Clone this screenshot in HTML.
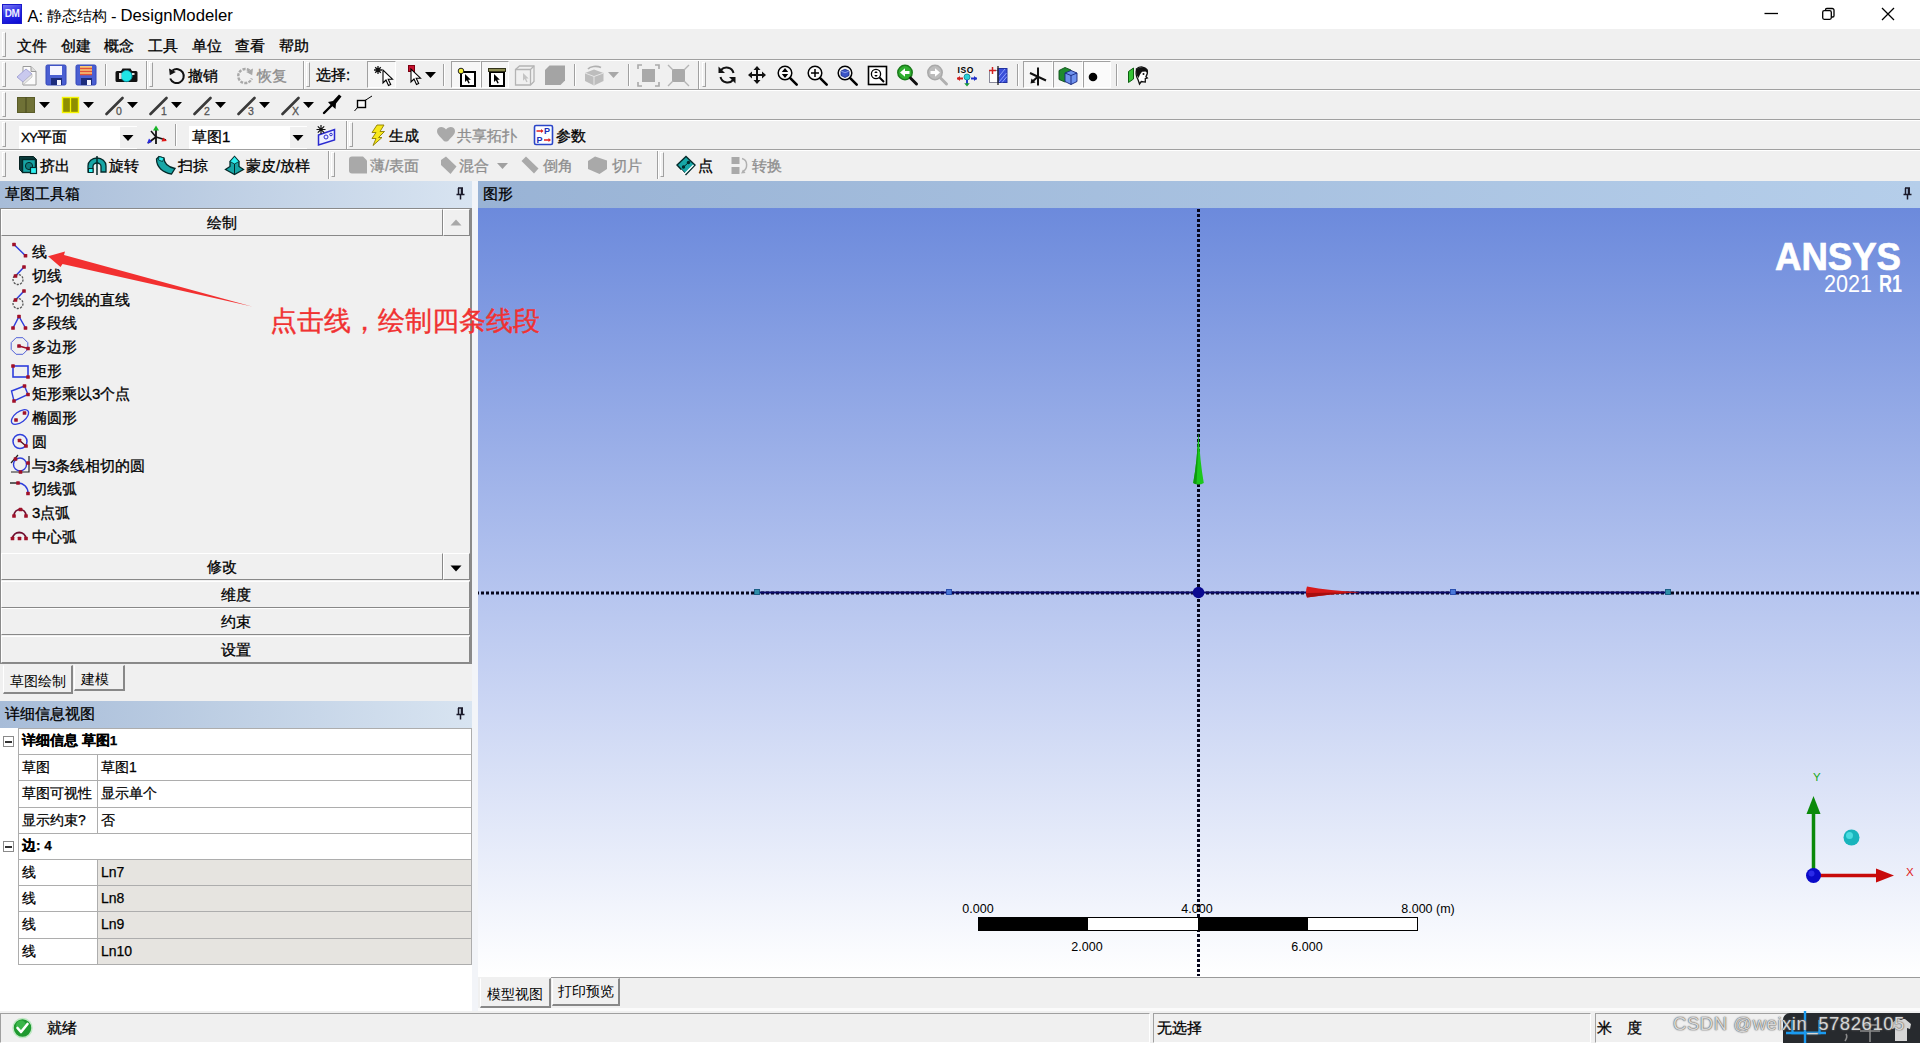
<!DOCTYPE html>
<html><head><meta charset="utf-8">
<style>
*{box-sizing:border-box;margin:0;padding:0}
html,body{width:1920px;height:1043px;overflow:hidden;background:#f0f0f0;font-family:"Liberation Sans",sans-serif;font-size:15px;color:#000}
.a{position:absolute}
.t{position:absolute;white-space:nowrap;line-height:20px;height:20px;-webkit-text-stroke-width:.3px}
.g{color:#8e8e8e}
.t,.ti{text-align-last:justify;text-justify:inter-character}
.hl{position:absolute;left:0;width:1920px;height:2px;border-top:1px solid #a0a0a0;border-bottom:1px solid #fff}
.grip{position:absolute;width:4px;height:25px;margin-left:-2px;margin-top:-1px;border:1px solid;border-color:#fff #a0a0a0 #a0a0a0 #fff}
.vs{position:absolute;width:2px;height:24px;border-left:1px solid #a0a0a0;border-right:1px solid #fff}
.bx{position:absolute;border:1px solid;border-color:#a0a0a0 #fff #fff #a0a0a0;background:#f6f6f6}
svg{position:absolute;overflow:visible}
.hdr{position:absolute;height:27px;top:181px}
.sec{position:absolute;left:1px;width:470px;height:27px;border:1px solid;border-color:#fff #888 #888 #fff;background:#f0f0f0;text-align:center;line-height:26px;-webkit-text-stroke-width:.3px}
.ti{position:absolute;left:32px;white-space:nowrap;line-height:20px;-webkit-text-stroke-width:.3px}
.dr{position:absolute;left:18px;width:454px;height:27px;border:1px solid #adadad;background:#fff;font-size:14px;line-height:24px;-webkit-text-stroke-width:.25px}
.dr .k{position:absolute;left:0;top:0;width:79px;height:25px;border-right:1px solid #adadad;padding-left:3px;background:#fff}
.dr .v{position:absolute;left:79px;top:0;right:0;height:25px;padding-left:3px}
</style></head><body>
<!-- TITLE BAR -->
<div class="a" id="title" style="left:0;top:0;width:1920px;height:29px;background:#fff">
<div class="a" style="left:2px;top:4px;width:20px;height:20px;background:linear-gradient(160deg,#7a7af2 0%,#2c2ce6 45%,#0a0ad2 100%);border:1px solid #1a1acc;color:#eef0ff;font-size:10px;font-weight:bold;line-height:18px;text-align:center;letter-spacing:-0.5px">DM</div>
<div class="t" style="left:27.5px;top:5px;font-size:16.5px;line-height:22px;height:22px;-webkit-text-stroke-width:0"><span>A: </span><span style="position:absolute;left:19.5px;font-size:14.6px;width:58.5px;text-align-last:justify;text-justify:inter-character">静态结构</span><span style="position:absolute;left:83.5px"> - </span><span style="position:absolute;left:93px;font-size:16.7px">DesignModeler</span></div>
<svg style="left:1755px;top:0" width="165" height="30" fill="none" stroke="#000" stroke-width="1.3">
<path d="M9.5 13.5H23"/>
<rect x="67.7" y="10.7" width="8.6" height="8.6" rx="1.5"/><path d="M70.5 10.5V9.8a1.3 1.3 0 0 1 1.3-1.3h5.4a1.8 1.8 0 0 1 1.8 1.8v5.4a1.3 1.3 0 0 1-1.3 1.3h-.9"/>
<path d="M127 8L139 20M139 8L127 20"/>
</svg>
</div>
<!-- MENU + TOOLBARS -->
<div class="a" id="bars" style="left:0;top:30px;width:1920px;height:151px;background:#f0f0f0">
<!-- coordinates inside are page-y minus 30 -->
<div class="hl" style="top:29px"></div><div class="hl" style="top:59px"></div><div class="hl" style="top:89px"></div><div class="hl" style="top:119px"></div>
<!-- menu -->
<div class="grip" style="left:4px;top:3px"></div>
<div class="t" style="left:17px;top:6px;width:30.05px">文件</div><div class="t" style="left:61px;top:6px;width:30.05px">创建</div><div class="t" style="left:104px;top:6px;width:30.05px">概念</div><div class="t" style="left:148px;top:6px;width:30.05px">工具</div><div class="t" style="left:192px;top:6px;width:30.05px">单位</div><div class="t" style="left:235px;top:6px;width:30.05px">查看</div><div class="t" style="left:279px;top:6px;width:30.05px">帮助</div>
<!-- row1 -->
<div class="grip" style="left:4px;top:33px"></div>
<div class="vs" style="left:105px;top:34px;height:22px"></div>
<div class="vs" style="left:146px;top:31px;height:28px"></div><div class="grip" style="left:151px;top:33px"></div>
<div class="t" style="left:188px;top:36px;width:30.05px">撤销</div><div class="t g" style="left:257px;top:36px;width:30.05px">恢复</div>
<div class="vs" style="left:303px;top:31px;height:28px"></div><div class="grip" style="left:308px;top:33px"></div>
<div class="t" style="left:316px;top:35px;width:34.22px">选择:</div>
<div class="bx" style="left:367px;top:31px;width:29px;height:27px"></div>
<div class="vs" style="left:443px;top:34px;height:22px"></div>
<div class="bx" style="left:451px;top:31px;width:30px;height:27px"></div><div class="bx" style="left:481px;top:31px;width:28px;height:27px"></div>
<div class="vs" style="left:574px;top:34px;height:22px"></div>
<div class="vs" style="left:628px;top:34px;height:22px"></div>
<div class="vs" style="left:698px;top:31px;height:28px"></div><div class="grip" style="left:704px;top:33px"></div>
<div class="vs" style="left:1017px;top:34px;height:22px"></div>
<div class="bx" style="left:1023px;top:31px;width:30px;height:27px"></div><div class="bx" style="left:1053px;top:31px;width:30px;height:27px"></div><div class="bx" style="left:1083px;top:31px;width:28px;height:27px;background:#fafafa"></div>
<div class="vs" style="left:1116px;top:34px;height:22px"></div>
<!-- row2 -->
<div class="grip" style="left:4px;top:63px"></div>
<!-- row3 -->
<div class="grip" style="left:4px;top:93px"></div>
<div class="a" style="left:19px;top:96px;width:118px;height:23px;background:#fff"></div><div class="a" style="left:120px;top:97px;width:17px;height:21px;background:#f0f0f0"></div>
<div class="t" style="left:21px;top:97px"><span style="font-size:13.5px;letter-spacing:-1px">XY</span>平面</div>
<div class="vs" style="left:175px;top:94px;height:22px"></div>
<div class="a" style="left:189px;top:96px;width:118px;height:23px;background:#fff"></div><div class="a" style="left:290px;top:97px;width:17px;height:21px;background:#f0f0f0"></div>
<div class="t" style="left:192px;top:97px;width:38.39px">草图1</div>
<div class="vs" style="left:346px;top:91px;height:28px"></div><div class="grip" style="left:351px;top:93px"></div>
<div class="t" style="left:389px;top:96px;width:30.05px">生成</div><div class="t g" style="left:457px;top:96px;width:60.05px">共享拓扑</div><div class="t" style="left:556px;top:96px;width:30.05px">参数</div>
<!-- row4 -->
<div class="grip" style="left:4px;top:123px"></div>
<div class="t" style="left:40px;top:126px;width:30.05px">挤出</div><div class="t" style="left:109px;top:126px;width:30.05px">旋转</div><div class="t" style="left:178px;top:126px;width:30.05px">扫掠</div><div class="t" style="left:246px;top:126px;width:64.22px">蒙皮/放样</div>
<div class="vs" style="left:328px;top:121px;height:28px"></div><div class="grip" style="left:333px;top:123px"></div>
<div class="t g" style="left:370px;top:126px;width:49.22px">薄/表面</div><div class="t g" style="left:459px;top:126px;width:30.05px">混合</div><div class="t g" style="left:543px;top:126px;width:30.05px">倒角</div><div class="t g" style="left:612px;top:126px;width:30.05px">切片</div>
<div class="vs" style="left:657px;top:121px;height:28px"></div><div class="grip" style="left:662px;top:123px"></div>
<div class="t" style="left:698px;top:126px">点</div><div class="t g" style="left:752px;top:126px;width:30.05px">转换</div>
</div>
<!-- LEFT PANEL -->
<div class="a" id="left" style="left:0;top:181px;width:478px;height:831px;background:#f2f4f8">
<div class="hdr" style="left:0;top:0;width:472px;background:linear-gradient(90deg,#a7bcd8,#d8e4f1)"></div>
<div class="t" style="left:5px;top:3px;width:75.05px">草图工具箱</div>
<div class="a" style="left:0;top:27px;width:472px;height:456px;background:#f0f0f0;border:1px solid;border-color:#8a8a8a;border-right-width:2px"></div>
<div class="sec" style="top:28px;width:442px">绘制</div><div class="sec" style="left:443px;top:28px;width:27px"></div>
<div class="ti" style="top:61px">线</div><div class="ti" style="top:85px;width:30.05px">切线</div><div class="ti" style="top:109px;width:98.39px">2个切线的直线</div><div class="ti" style="top:132px;width:45.05px">多段线</div><div class="ti" style="top:156px;width:45.05px">多边形</div><div class="ti" style="top:180px;width:30.05px">矩形</div><div class="ti" style="top:203px;width:98.39px">矩形乘以3个点</div><div class="ti" style="top:227px;width:45.05px">椭圆形</div><div class="ti" style="top:251px">圆</div><div class="ti" style="top:275px;width:113.39px">与3条线相切的圆</div><div class="ti" style="top:298px;width:45.05px">切线弧</div><div class="ti" style="top:322px;width:38.39px">3点弧</div><div class="ti" style="top:346px;width:45.05px">中心弧</div>
<div class="sec" style="top:372px;width:442px">修改</div><div class="sec" style="left:443px;top:372px;width:27px"></div>
<div class="sec" style="top:400px;width:469px">维度</div>
<div class="sec" style="top:427px;width:469px">约束</div>
<div class="sec" style="top:455px;width:469px">设置</div>
<div class="a" style="left:0;top:483px;width:472px;height:37px;background:#f0f0f0"></div>
<div class="a" style="left:74px;top:484px;width:51px;height:26px;background:#f0f0f0;border:1px solid;border-color:#f0f0f0 #888 #888 #fff;border-right-width:2px;border-bottom-width:2px;font-size:14px;line-height:26px;padding-left:6px">建模</div>
<div class="a" style="left:3px;top:484px;width:70px;height:29px;background:#f0f0f0;border:1px solid;border-color:#f0f0f0 #888 #888 #fff;border-right-width:2px;border-bottom-width:2px;font-size:14px;line-height:30px;padding-left:6px">草图绘制</div>
<div class="hdr" style="left:0;top:520px;width:472px;background:linear-gradient(90deg,#a7bcd8,#d8e4f1)"></div>
<div class="t" style="left:5px;top:523px;width:90.05px">详细信息视图</div>
<div class="a" style="left:0;top:547px;width:472px;height:284px;background:#fff"></div>
<div class="dr" style="top:547px;height:27px;font-weight:bold;font-size:13.5px;padding-left:3px">详细信息 草图1</div><div class="a" style="left:3px;top:555px;width:11px;height:11px;border:1px solid #8a8a8a;background:#fff"><div class="a" style="left:1px;top:3.5px;width:7px;height:2px;background:#333"></div></div><div class="dr" style="top:573px;height:27px"><div class="k" style="height:25px">草图</div><div class="v" style="height:25px;background:#fff">草图1</div></div><div class="dr" style="top:599px;height:28px"><div class="k" style="height:26px">草图可视性</div><div class="v" style="height:26px;background:#fff">显示单个</div></div><div class="dr" style="top:626px;height:27px"><div class="k" style="height:25px">显示约束?</div><div class="v" style="height:25px;background:#fff">否</div></div><div class="dr" style="top:652px;height:27px;font-weight:bold;font-size:13.5px;padding-left:3px">边: 4</div><div class="a" style="left:3px;top:660px;width:11px;height:11px;border:1px solid #8a8a8a;background:#fff"><div class="a" style="left:1px;top:3.5px;width:7px;height:2px;background:#333"></div></div><div class="dr" style="top:678px;height:27px"><div class="k" style="height:25px">线</div><div class="v" style="height:25px;background:#e6e4e0">Ln7</div></div><div class="dr" style="top:704px;height:27px"><div class="k" style="height:25px">线</div><div class="v" style="height:25px;background:#e6e4e0">Ln8</div></div><div class="dr" style="top:730px;height:28px"><div class="k" style="height:26px">线</div><div class="v" style="height:26px;background:#e6e4e0">Ln9</div></div><div class="dr" style="top:757px;height:27px"><div class="k" style="height:25px">线</div><div class="v" style="height:25px;background:#e6e4e0">Ln10</div></div>
</div>
<!-- VIEWPORT -->
<div class="a" id="view" style="left:478px;top:181px;width:1442px;height:831px;background:#f0f0f0">
<div class="hdr" style="left:0;top:0;width:1442px;background:linear-gradient(90deg,#99b3d5,#b5ceea)"></div>
<div class="t" style="left:5px;top:3px;width:30.05px">图形</div>
<div class="a" id="cv" style="left:0;top:27px;width:1442px;height:769px;background:linear-gradient(180deg,#6c8adc 0%,#b6c5ef 50%,#ffffff 100%)"></div>
<div class="a" style="left:73px;top:796px;width:1369px;height:1px;background:#9a9a9a"></div><div class="a" style="left:0;top:827px;width:1442px;height:4px;background:#fbfbfb"></div>
<div class="a" style="left:74px;top:797px;width:68px;height:28px;background:#f0f0f0;border:1px solid;border-color:#f0f0f0 #888 #888 #fff;border-right-width:2px;border-bottom-width:2px;font-size:14px;line-height:24px;padding-left:5px">打印预览</div>
<div class="a" style="left:2px;top:797px;width:71px;height:30px;background:#f0f0f0;border:1px solid;border-color:#f0f0f0 #888 #888 #fff;border-right-width:2px;border-bottom-width:2px;font-size:14px;line-height:30px;padding-left:6px">模型视图</div>
</div>
<!-- ICON LAYER (page coords) -->
<svg id="ic" style="left:0;top:0;z-index:3" width="1920" height="1043" viewBox="0 0 1920 1043">
<defs>
<path id="dd" d="M0 0h11l-5.5 6z"/>
<path id="cur" d="M0 0v13l3-3 2.5 5.5 2.2-1-2.5-5.3h4.3z"/>
<g id="mag"><circle cx="0" cy="0" r="6.800" fill="#fafafa" stroke="#000" stroke-width="1.500"/><path d="M5.200 5.200l6.500 6.500" stroke="#000" stroke-width="2.600" stroke-linecap="round"/></g>
</defs>
<!-- CANVAS -->
<g id="canvas">
<path d="M478 593H1920" stroke="#06061c" stroke-width="3" stroke-dasharray="3 2" stroke-dashoffset="2"/>
<path d="M1198.500 208V976" stroke="#06061c" stroke-width="3" stroke-dasharray="3 2" stroke-dashoffset="-1"/>
<path d="M757 592.500H1668" stroke="#0a0a6a" stroke-width="2"/>
<g fill="#2f8fa8" stroke="#1b5f86" stroke-width="1"><rect x="754.500" y="589.500" width="5" height="5"/><rect x="946.500" y="589.500" width="5" height="5" fill="#4a78d8" stroke="#2a50b0"/><rect x="1450.500" y="589.500" width="5" height="5" fill="#4a78d8" stroke="#2a50b0"/><rect x="1665.500" y="589.500" width="5" height="5"/></g>
<circle cx="1198.500" cy="592.500" r="5.800" fill="#0a0a90"/>
<path d="M1198.500 432q1.500 30 5.300 51q-5.300 3-10.600 0q3.800-21 5.300-51z" fill="#1cc81c"/><path d="M1198.500 432q-1.500 30-5.300 51q1.500 1 3.300 1.300q1.500-30 2-52.300z" fill="#0e9a0e"/>
<path d="M1307 586.500q-2 5.500 0 11q22-3.500 53-5.300q-31-1.500-53-5.700z" fill="#d81a1a"/><path d="M1306 593l54-.8q-31 1.800-53 5.300q-1-2-1-4.500z" fill="#a80e0e"/>
<!-- logo -->
<text x="1775" y="270" font-family="Liberation Sans" font-weight="bold" font-size="38" fill="#fff" stroke="#fff" stroke-width=".7" textLength="126" lengthAdjust="spacingAndGlyphs">ANSYS</text>
<text x="1824" y="292" font-family="Liberation Sans" font-size="23" fill="#fff" textLength="48" lengthAdjust="spacingAndGlyphs">2021</text>
<text x="1879" y="292" font-family="Liberation Sans" font-weight="bold" font-size="23" fill="#fff" textLength="23" lengthAdjust="spacingAndGlyphs">R1</text>
<!-- scale -->
<rect x="978.500" y="917.500" width="439" height="13" fill="#fff" stroke="#000"/><rect x="978" y="917" width="110" height="14" fill="#000"/><rect x="1198" y="917" width="110" height="14" fill="#000"/>
<g font-family="Liberation Sans" font-size="12.500" fill="#000" text-anchor="middle"><text x="978" y="913">0.000</text><text x="1197" y="913">4.000</text><text x="1428" y="913">8.000 (m)</text><text x="1087" y="951">2.000</text><text x="1307" y="951">6.000</text></g>
<!-- triad -->
<path d="M1813.500 875V812" stroke="#0a8a0a" stroke-width="3.500"/><path d="M1813.500 796l7 18h-14z" fill="#0a8a0a"/>
<path d="M1813 875.500H1878" stroke="#c80a0a" stroke-width="3.500"/><path d="M1894 875.500l-18 7v-14z" fill="#c80a0a"/>
<circle cx="1813.500" cy="875.500" r="7.500" fill="#0a0ac8"/><circle cx="1811.500" cy="873.500" r="3" fill="#2a2ae8"/>
<circle cx="1851.500" cy="837.500" r="8" fill="#18b4bc"/><circle cx="1849.500" cy="835.500" r="3.500" fill="#4adce0"/>
<text x="1813" y="781" font-family="Liberation Sans" font-size="11.500" fill="#18a818">Y</text><text x="1906" y="876" font-family="Liberation Sans" font-size="11.500" fill="#e01818">X</text>
</g>
<!-- TREE ICONS -->
<g id="tree" fill="none" stroke-width="1.300">
<path d="M14 244.500L25.500 255.700" stroke="#2e3edc" stroke-width="1.5"/><path d="M24 267L15.500 276" stroke="#2e3edc" stroke-width="1.5"/><circle cx="18" cy="279.5" r="5" stroke="#555" stroke-dasharray="2.2 1.2"/><path d="M24 291L15.500 300" stroke="#2e3edc" stroke-width="1.5"/><circle cx="18" cy="303.5" r="5" stroke="#555" stroke-dasharray="2.2 1.2"/><path d="M13 328L19 316.500L25.500 328" stroke="#2e3edc" stroke-width="1.5"/><polygon points="27.8,349.4 22.9,354.3 16.1,354.3 11.2,349.4 11.2,342.6 16.1,337.7 22.9,337.7 27.8,342.6" stroke="#5060d8" stroke-width="1"/><path d="M19 346L28 348.500" stroke="#a01028" stroke-width="1.6"/><rect x="13" y="366" width="15" height="11" stroke="#2e3edc" stroke-width="1.6"/><path d="M24.500 386L28 394.500L14 401L11.500 391z" stroke="#2e3edc" stroke-width="1.4"/><ellipse cx="20" cy="417" rx="10" ry="5.200" transform="rotate(-37 20 417)" stroke="#2e3edc" stroke-width="1.3"/><circle cx="20" cy="441.500" r="7" stroke="#2e3edc" stroke-width="1.5"/><path d="M19.500 440.500L26 446" stroke="#500818" stroke-width="1.3"/><path d="M11 472H29V456M11 463L18 455" stroke="#222" stroke-width="1.2"/><circle cx="20" cy="464.500" r="6.500" stroke="#2e3edc" stroke-width="1.4"/><path d="M10 483H18" stroke="#222" stroke-width="1.4"/><path d="M18 483A10 10 0 0 1 28 493.500" stroke="#2e3edc" stroke-width="1.5"/><path d="M14 516C14 507.500 26 507.500 26 516" stroke="#701030" stroke-width="1.8"/><path d="M12.500 538.500A6.800 6.800 0 0 1 26 538.500" stroke="#701030" stroke-width="1.8"/>
<g fill="#a01028" stroke="none"><rect x="12.2" y="242.7" width="3.6" height="3.6" rx=".6"/><rect x="23.7" y="253.9" width="3.6" height="3.6" rx=".6"/><rect x="22.2" y="265.2" width="3.6" height="3.6" rx=".6"/><rect x="13.7" y="274.2" width="3.6" height="3.6" rx=".6"/><rect x="22.2" y="289.2" width="3.6" height="3.6" rx=".6"/><rect x="13.7" y="298.2" width="3.6" height="3.6" rx=".6"/><rect x="17.2" y="314.7" width="3.6" height="3.6" rx=".6"/><rect x="11.2" y="326.2" width="3.6" height="3.6" rx=".6"/><rect x="23.7" y="326.2" width="3.6" height="3.6" rx=".6"/><rect x="17.2" y="344.2" width="3.6" height="3.6" rx=".6"/><rect x="26.2" y="346.7" width="3.6" height="3.6" rx=".6"/><rect x="11.2" y="364.2" width="3.6" height="3.6" rx=".6"/><rect x="26.2" y="375.2" width="3.6" height="3.6" rx=".6"/><rect x="22.7" y="384.2" width="3.6" height="3.6" rx=".6"/><rect x="26.2" y="392.7" width="3.6" height="3.6" rx=".6"/><rect x="12.2" y="399.2" width="3.6" height="3.6" rx=".6"/><rect x="22.7" y="411.2" width="3.6" height="3.6" rx=".6"/><rect x="14.2" y="418.2" width="3.6" height="3.6" rx=".6"/><rect x="17.7" y="438.7" width="3.6" height="3.6" rx=".6"/><rect x="24.2" y="444.2" width="3.6" height="3.6" rx=".6"/><rect x="13.7" y="457.2" width="3.6" height="3.6" rx=".6"/><rect x="26.2" y="461.2" width="3.6" height="3.6" rx=".6"/><rect x="18.7" y="470.2" width="3.6" height="3.6" rx=".6"/><rect x="16.2" y="481.2" width="3.6" height="3.6" rx=".6"/><rect x="26.2" y="491.7" width="3.6" height="3.6" rx=".6"/><rect x="12.2" y="514.2" width="3.6" height="3.6" rx=".6"/><rect x="18.7" y="507.7" width="3.6" height="3.6" rx=".6"/><rect x="24.2" y="514.2" width="3.6" height="3.6" rx=".6"/><rect x="10.7" y="536.7" width="3.6" height="3.6" rx=".6"/><rect x="17.7" y="536.7" width="3.6" height="3.6" rx=".6"/><rect x="24.2" y="536.7" width="3.6" height="3.6" rx=".6"/></g>
</g>
<!-- MISC -->
<g id="misc"><path d="M458 188h5M458.5 188v6M461.5 188v6M462.2 188v6M456.5 194.5h8M460.5 194.5v5" stroke="#1a1a2a" stroke-width="1.5" fill="none"/><path d="M1905 188h5M1905.5 188v6M1908.5 188v6M1909.2 188v6M1903.5 194.5h8M1907.5 194.5v5" stroke="#1a1a2a" stroke-width="1.5" fill="none"/><path d="M458 708h5M458.5 708v6M461.5 708v6M462.2 708v6M456.5 714.5h8M460.5 714.5v5" stroke="#1a1a2a" stroke-width="1.5" fill="none"/><path d="M450.500 225.500h11l-5.500-6z" fill="#a8a8a8"/><path d="M450.500 565.500h11l-5.500 6z" fill="#000"/><circle cx="22.500" cy="1028" r="9.5" fill="#1f9a30" stroke="#bfe8c4" stroke-width="1.500"/><circle cx="21" cy="1025.500" r="5" fill="#4cc85a" opacity=".6"/><path d="M17.500 1028l3.500 4 6.500-8" fill="none" stroke="#fff" stroke-width="2.600" stroke-linecap="round" stroke-linejoin="round"/><path d="M48 256.300L65 251.500L64 255L252 306.500L62.500 264L60.500 267z" fill="#f23030"/><g stroke="#1a9af0" stroke-width="2.400" fill="none"><path d="M1792.500 1020v13h27v-13"/><path d="M1805 1011v32M1786 1033h40"/></g><path d="M1895 1041v-13l-3 1-1-5 6-5h2q2 2 4 0h2l6 5-1 5-3-1v13z" fill="#d6d6d6"/><path d="M1846 1034q2 3-1 7M1862 1025h16M1860 1031h20M1870 1018v24" stroke="#8a8a8a" stroke-width="1.600" fill="none"/></g>
<!-- ROW1 -->
<g id="r1">
<!-- new -->
<path d="M23 66.5h8l5 5v13.5h-13z" fill="#fbfbfb" stroke="#9a9a9a"/><path d="M31 66.500v5h5" fill="#ddd" stroke="#9a9a9a"/>
<path d="M17 77l9-8 6 5-9 8z" fill="#c9c9ee" stroke="#a5a5d8"/><path d="M23 82l9-8v3l-9 8z" fill="#e8e8e8" stroke="#b0b0b0" stroke-width=".6"/>
<!-- save -->
<rect x="46" y="65" width="20" height="20" rx="1.5" fill="#4a5fd2" stroke="#3346b8"/><rect x="50" y="66" width="12" height="9" fill="#f4f4ff"/><rect x="51" y="78" width="11" height="7" fill="#1c2c7c"/><rect x="57" y="80" width="4" height="5" fill="#f4f4ff"/>
<rect x="76" y="65" width="20" height="20" rx="1.5" fill="#4a5fd2" stroke="#3346b8"/><rect x="80" y="66" width="12" height="9" fill="#f7c97a"/><path d="M80 68.500h12M80 71.500h12M80 74.500h12" stroke="#e05038" stroke-width="1.3"/><rect x="81" y="78" width="11" height="7" fill="#1c2c7c"/><rect x="87" y="80" width="4" height="5" fill="#f4f4ff"/>
<!-- camera -->
<path d="M117 71h4l1.500-2.500h8l1.500 2.500h4a1.500 1.500 0 0 1 1.500 1.500v8a1.500 1.500 0 0 1-1.500 1.500h-19a1.500 1.500 0 0 1-1.500-1.500v-8a1.500 1.500 0 0 1 1.500-1.500z" fill="#111"/><circle cx="126.500" cy="76" r="5.600" fill="#1fe6e6" stroke="#0a8f9f" stroke-width="1"/><rect x="119" y="73" width="2.500" height="6" fill="#ddd"/><rect x="132" y="73" width="2.500" height="2" fill="#ddd"/>
<!-- undo / redo -->
<path d="M172.500 70.500a7 7 0 1 1-2.300 8" fill="none" stroke="#111" stroke-width="2"/><path d="M169 68.500l.8 6.800 6-3.200z" fill="#111"/>
<path d="M249.500 70.500a7 7 0 1 0 2.300 8" fill="none" stroke="#a8a8a8" stroke-width="2.400" stroke-dasharray="3 1.200"/><path d="M253 68.500l-.8 6.800-6-3.200z" fill="#a8a8a8"/>
<!-- select new -->
<path d="M378 66v8M374 70h8M375.200 67.200l5.600 5.600M380.800 67.200l-5.600 5.600" stroke="#111" stroke-width="1.300"/><use href="#cur" x="383" y="70" fill="#fff" stroke="#000" stroke-width="1.100"/>
<rect x="408.500" y="65.500" width="6" height="6" fill="#c8102e" stroke="#7a0010"/><use href="#cur" x="411" y="69" fill="#fff" stroke="#000" stroke-width="1.100"/><use href="#dd" x="425" y="72"/>
<!-- filter icons -->
<rect x="461" y="72" width="14" height="14" fill="#fff" stroke="#000" stroke-width="2"/><use href="#cur" x="465" y="74" fill="#000" transform="translate(465 74) scale(.62) translate(-465 -74)"/><circle cx="461" cy="71" r="2.800" fill="#f2ee3a" stroke="#222" stroke-width="1"/>
<rect x="490" y="72" width="14" height="14" fill="#fff" stroke="#000" stroke-width="2"/><rect x="488.500" y="68.500" width="17" height="3" fill="#8c8c52" stroke="#33331a" stroke-width="1"/><use href="#cur" x="494" y="74" fill="#000" transform="translate(494 74) scale(.62) translate(-494 -74)"/>
<g fill="none" stroke="#b4b4b4" stroke-width="1.300"><path d="M515.500 69.500l4-3.500h14.500v15.500l-3.500 3.500h-15z"/><path d="M515.500 69.500h15v15.500M530.500 69.500l3.500-3.500"/></g><use href="#cur" x="523" y="73" fill="#c4c4c4" transform="translate(523 73) scale(.6) translate(-523 -73)"/>
<path d="M545 70l4.500-4.500h15.500v15l-4.500 4.500h-15.500z" fill="#a4a4a4"/>
<!-- gray cube rotate -->
<path d="M585 73l9-3.500 9.500 3.500v8l-9.500 4.500-9-4.500z" fill="#bdbdbd"/><path d="M585 73l9 3.500 9.500-3.500M594 76.500v9" stroke="#e6e6e6" fill="none"/><path d="M588 69a8 4 0 0 1 13-1.500" fill="none" stroke="#b0b0b0" stroke-width="1.600"/><use href="#dd" x="608" y="72" fill="#a8a8a8"/>
<!-- fit icons gray -->
<rect x="642" y="69" width="13" height="13" fill="#a9a9a9"/><path d="M638 69v-4h4M655 65h4v4M659 82v4h-4M642 86h-4v-4" fill="none" stroke="#a9a9a9" stroke-width="1.600"/>
<rect x="672" y="69" width="13" height="13" fill="#a9a9a9"/><path d="M668 65l5 5M689 65l-5 5M689 86l-5-5M668 86l5-5" stroke="#b4b4b4" stroke-width="1.400"/>
<!-- rotate -->
<g transform="translate(1454 0) scale(-1 1)"><g fill="none" stroke="#111" stroke-width="2"><path d="M720.500 73a7.200 7.200 0 0 1 12.500-3"/><path d="M733.500 77a7.200 7.200 0 0 1-12.500 3"/></g><path d="M735.500 66.500v6.500h-6.500z" fill="#111"/><path d="M718.500 83.500v-6.500h6.500z" fill="#111"/></g>
<!-- pan -->
<path d="M757 66l3.500 4h-2.500v4h4v-2.500l4 3.500-4 3.500v-2.500h-4v4h2.500l-3.500 4-3.500-4h2.500v-4h-4v2.500l-4-3.500 4-3.500v2.500h4v-4h-2.500z" fill="#111"/>
<!-- zooms -->
<use href="#mag" x="785" y="73"/><path d="M785 68l3.200 4h-6.400zM785 78l3.200-4h-6.400z" fill="#000"/>
<use href="#mag" x="815" y="73"/><path d="M811 73h8M815 69v8" stroke="#000" stroke-width="1.500"/>
<use href="#mag" x="845" y="73"/><path d="M841 71l4-1.800 4 1.800v4.500l-4 2-4-2z" fill="#3a55c8" stroke="#162a80" stroke-width=".8"/><path d="M841 71l4 1.800 4-1.800" fill="none" stroke="#9fb0f0" stroke-width=".8"/>
<rect x="868.500" y="66.500" width="18" height="18" fill="#fff" stroke="#000" stroke-width="1.600"/><circle cx="876" cy="74" r="4.600" fill="#fff" stroke="#000" stroke-width="1.300"/><path d="M879.500 77.500l4.500 4.500" stroke="#000" stroke-width="2"/><path d="M876 71l1.800 2h-3.600zM876 77l1.800-2h-3.600z" fill="#000"/>
<circle cx="905" cy="72.500" r="7.200" fill="#2fae2f" stroke="#1a7a1a" stroke-width="1.500"/><path d="M900 72.500l5-4.200v2.600h4.500v3.200h-4.500v2.600z" fill="#fff"/><path d="M910.500 78l6 6" stroke="#111" stroke-width="3" stroke-linecap="round"/>
<circle cx="935" cy="72.500" r="7.200" fill="#bcbcbc" stroke="#a8a8a8" stroke-width="1.500"/><path d="M940 72.500l-5-4.200v2.600h-4.500v3.200h4.500v2.600z" fill="#fff"/><path d="M940.500 78l6 6" stroke="#b0b0b0" stroke-width="3" stroke-linecap="round"/>
<!-- ISO -->
<text x="957.500" y="72.500" font-family="Liberation Sans" font-weight="bold" font-size="8.500" letter-spacing=".6">ISO</text><circle cx="967" cy="77" r="3" fill="#28d0d8" stroke="#0a7f90" stroke-width=".8"/><path d="M957 78.500h6" stroke="#d02020" stroke-width="2"/><path d="M971 78.500h6" stroke="#2030c8" stroke-width="2"/><path d="M957 78.500l3-2.500v5z" fill="#d02020"/><path d="M977 78.500l-3-2.500v5z" fill="#2030c8"/><path d="M967 80v5" stroke="#2040c8" stroke-width="2"/><path d="M967 86.500l-2.800-3.300h5.600z" fill="#1a9a3a"/>
<!-- look at -->
<rect x="989.500" y="70.500" width="9" height="12" fill="#fdfdfd" stroke="#8a8a9a"/><rect x="998" y="68.500" width="9" height="14" fill="#3a4fd8" stroke="#2030a0"/><path d="M999 82l7.500-9M1002 82.500l5-6M998.500 77l6.500-8" stroke="#8ea0ff" stroke-width="1"/><path d="M998 66v19" stroke="#222" stroke-width="1.300"/><path d="M989 70.500h7M992.500 67v7" stroke="#d02020" stroke-width="1.500"/>
<!-- triad1 -->
<path d="M1038 67.500v18M1030 73l16 7.500M1038 76.500l-6 5.500" stroke="#111" stroke-width="2"/><path d="M1030.500 83.500l1-5 4 4z" fill="#111"/>
<!-- cube -->
<path d="M1059 70.500l6-3 6 2.500v9l-6 3-6-2.500z" fill="#1f8a2f" stroke="#0c4f16" stroke-width=".9"/><path d="M1065 73l6-2.500 6 2.500v8.500l-6 3-6-3z" fill="#6f92ee" stroke="#15257c" stroke-width=".9"/><path d="M1065 73l6 2.500 6-2.500M1071 75.500v9" stroke="#15257c" stroke-width=".9" fill="none"/>
<circle cx="1093" cy="77" r="4.300" fill="#000"/>
<!-- plane+face -->
<path d="M1128.500 71.500l5-3.500v11l-5 3.500z" fill="#35c335" stroke="#0c5f10" stroke-width="1"/><path d="M1137 68.500c3-2.500 8-1.800 10 1.200 1 2.600.2 5-1 7l1.300 1.300-2 .6v3.500l-4-.6-1.800 2.500-1.500-4.500c-2.200-3-2.500-8-.999-11z" fill="#fff" stroke="#111" stroke-width="1.300"/><path d="M1136.500 69.500c3.500-3.500 9-2.500 11 .8l.3 3-2.300-1.800-3.500.3-2 2.700-1.500 3.500c-2-2.500-2.800-6-2-8.500z" fill="#111"/><circle cx="1143.500" cy="74" r="1" fill="#111"/>
</g>
<!-- ROW2 -->
<g id="r2">
<rect x="17.500" y="97.500" width="17" height="15" fill="#6f7136" stroke="#5a5c28"/><path d="M26 97v16" stroke="#4c4e22" stroke-width="1.200"/><use href="#dd" x="39" y="102"/>
<rect x="62.500" y="97.500" width="16" height="15" fill="#8e8e00" stroke="#f4f400" stroke-width="1.400"/><path d="M70.500 97v16" stroke="#f4f400" stroke-width="1.300"/><use href="#dd" x="83" y="102"/>
<g stroke="#3a3a3a" stroke-width="2.600" stroke-linecap="round"><path d="M106.500 114l16-16M150.500 114l16-16M194.500 114l16-16M238.500 114l16-16M282.500 114l16-16"/></g>
<g font-family="Liberation Sans" font-size="10.500" fill="#555" stroke="#555" stroke-width=".3"><text x="116" y="114.500">0</text><text x="161" y="114.500">1</text><text x="204" y="114.500">2</text><text x="248" y="114.500">3</text><text x="292" y="114.500">X</text></g>
<use href="#dd" x="127" y="102"/><use href="#dd" x="171" y="102"/><use href="#dd" x="215" y="102"/><use href="#dd" x="259" y="102"/><use href="#dd" x="303" y="102"/>
<path d="M323 113.500l8-8-3-3.500 5-1 6-6.500 2.500 2-5.500 7-.5 5.500-3.500-3z" fill="#000"/><path d="M324 113l7-7" stroke="#000" stroke-width="2.400" stroke-linecap="round"/>
<rect x="357.500" y="100.500" width="8" height="7" fill="#f8f8f8" stroke="#000" stroke-width="1.400"/><path d="M365 100.500l7-4.500M357.500 107.500l-3 3.500" stroke="#000" stroke-width="1"/>
</g>
<!-- ROW3 -->
<g id="r3">
<use href="#dd" x="122.500" y="135"/><use href="#dd" x="292.500" y="135"/>
<path d="M156 128v16M156 137l-8 6M156 137l10 3" stroke="#111" stroke-width="1.800"/><path d="M156 125.500l3 5h-6z" fill="#18b428"/><path d="M167 141l-5.500.5 1.500-4z" fill="#e01818"/><path d="M147 143.500l2-5 3 3.500z" fill="#2828e0"/><path d="M151 131l5 6" stroke="#111" stroke-width="1.500"/>
<path d="M318.500 135l16-5.500v10.500l-16 5z" fill="#eef0ff" stroke="#2a2ad0" stroke-width="1.500"/><circle cx="326" cy="137" r="2" fill="none" stroke="#2a2ad0"/><circle cx="331" cy="134.500" r="1.300" fill="none" stroke="#2a2ad0"/><path d="M321 125v9M316.500 129.500h9M317.800 126.300l6.400 6.400M324.200 126.300l-6.400 6.400" stroke="#111" stroke-width="1.200"/>
<path d="M377 125h7l-4 6.500h4.500l-6 6h3.500l-9 8 3-7h-4l4-6h-4z" fill="#f7e81a" stroke="#8a7a00" stroke-width=".9"/>
<path d="M437 131c0-5 7-5 9-1.500 2-3.500 9-3.500 9 1.500 0 4-4 6-6 9-1.500 2-4.500 2-6 0-2-3-6-5-6-9z" fill="#a9a9a9"/>
<rect x="534.500" y="125.500" width="18" height="19" rx="1.500" fill="#fdfdff" stroke="#2a45c8" stroke-width="1.600"/><g font-family="Liberation Sans" font-weight="bold" font-size="9"><text x="544" y="134" fill="#1a2fb8">P</text><text x="536.500" y="143" fill="#1a2fb8">P</text></g><path d="M536.500 131h6M544 140h6" stroke="#e02020" stroke-width="1.400"/><path d="M543.500 131l-2.500-2v4zM551 140l-2.500-2v4z" fill="#e02020"/>
</g>
<!-- ROW4 -->
<g id="r4">
<path d="M19.500 156.500h14l3 3v13h-14l-3-3z" fill="#0b3b3b" stroke="#062222"/><rect x="22.500" y="159.500" width="13" height="13" fill="#17a6a6" stroke="#042a2a" stroke-width="1.400"/><circle cx="29" cy="166" r="3.600" fill="#0d7f7f" stroke="#042a2a"/><rect x="30.500" y="167.500" width="6" height="6" fill="#2ff0f0" stroke="#042a2a" stroke-width="1.200"/>
<path d="M88 172v-6a9 8 0 0 1 18 0v6h-5v-5.500a4 3.500 0 0 0-8 0v5.500z" fill="#17a6a6" stroke="#042a2a" stroke-width="1.300"/><rect x="88.500" y="168.500" width="4.500" height="4" fill="#2ff0f0" stroke="#042a2a"/><path d="M97 156v19" stroke="#042a2a" stroke-width="1.500"/>
<path d="M159 156.500l5 1.500c0 6 4 9 11 10.500l-3.500 5.500c-9-1.500-15-7-15-15z" fill="#17a6a6" stroke="#042a2a" stroke-width="1.300"/><path d="M159 156.500l5 1.500-1.500 3.500-4-1.500z" fill="#2ff0f0" stroke="#042a2a" stroke-width=".8"/>
<path d="M234.500 156.500l4.500 5v5l4.500 3-9 5-9-5 4.500-3v-5z" fill="#17a6a6" stroke="#042a2a" stroke-width="1.300"/><path d="M234.500 156.500l-4.500 5 4.500 2.500 4.500-2.500z" fill="#2ff0f0" stroke="#042a2a" stroke-width=".8"/><path d="M234.500 164v10.500" stroke="#042a2a"/>
<path d="M352 156.500h11l4 4v13h-15a3 3 0 0 1-3-3v-11a3 3 0 0 1 3-3z" fill="#a9a9a9"/>
<path d="M441 160l5-3.500 10.500 10-6 7.500-9.500-9z" fill="#a9a9a9"/>
<use href="#dd" x="497" y="163" fill="#a0a0a0"/>
<path d="M521.500 161l4.500-4.500 12.500 12-4.500 5z" fill="#a9a9a9"/>
<path d="M588 161l7-4.500 12 4v8.500l-7.500 5-11.500-5z" fill="#a9a9a9"/>
<path d="M686 156.500l9 8.500-9 9.500-9-9.500z" fill="#17a6a6" stroke="#042a2a" stroke-width="1.400"/><path d="M681 170l3.500 4 9-9" fill="none" stroke="#fff" stroke-width="1.300"/><circle cx="683.500" cy="167" r="1.700" fill="#042a2a"/><circle cx="688.500" cy="162.500" r="1.700" fill="#042a2a"/><path d="M683.500 167l5-4.500" stroke="#042a2a"/>
<rect x="731.500" y="157" width="8" height="7" fill="#a9a9a9"/><rect x="731.500" y="167" width="8" height="7" fill="#a9a9a9"/><path d="M742 158.500c6 1.500 6 10 1 13" fill="none" stroke="#b0b0b0" stroke-width="1.500"/><path d="M741 173.500l4.500-.5-2.500-3.500z" fill="#b0b0b0"/>
</g>
</svg>
<div class="t" style="left:270px;top:303px;font-size:27px;line-height:36px;height:36px;color:#f03232;z-index:5;-webkit-text-stroke:.4px #f03232;width:270.05px">点击线，绘制四条线段</div>
<!-- STATUS BAR -->
<div class="a" id="status" style="left:0;top:1011px;width:1920px;height:32px;background:#f0f0f0">
<div class="a" style="left:0;top:2px;width:1150px;height:30px;border:1px solid;border-color:#a0a0a0 #fff #fff #a0a0a0"></div>
<div class="a" style="left:1153px;top:2px;width:438px;height:30px;border:1px solid;border-color:#a0a0a0 #fff #fff #a0a0a0"></div>
<div class="a" style="left:1595px;top:2px;width:325px;height:30px;border:1px solid;border-color:#a0a0a0 #fff #fff #a0a0a0"></div>
<div class="t" style="left:47px;top:7px;width:30.05px">就绪</div>
<div class="t" style="left:1157px;top:7px;width:45.05px">无选择</div>
<div class="t" style="left:1597px;top:7px">米<span style="display:inline-block;width:15px"></span>度</div>
<div class="a" style="left:1783px;top:2px;width:137px;height:30px;background:#272a2e;border-radius:7px 0 0 0"></div>
<div class="t" id="wm" style="left:1673px;top:-2px;font-size:18.5px;line-height:30px;height:30px;color:#d6d6d6;-webkit-text-stroke-width:0;text-shadow:0 0 1px #444,0 0 2px #808080;z-index:6;letter-spacing:.55px">CSDN @weixin_57826105</div>
</div>
</body></html>
